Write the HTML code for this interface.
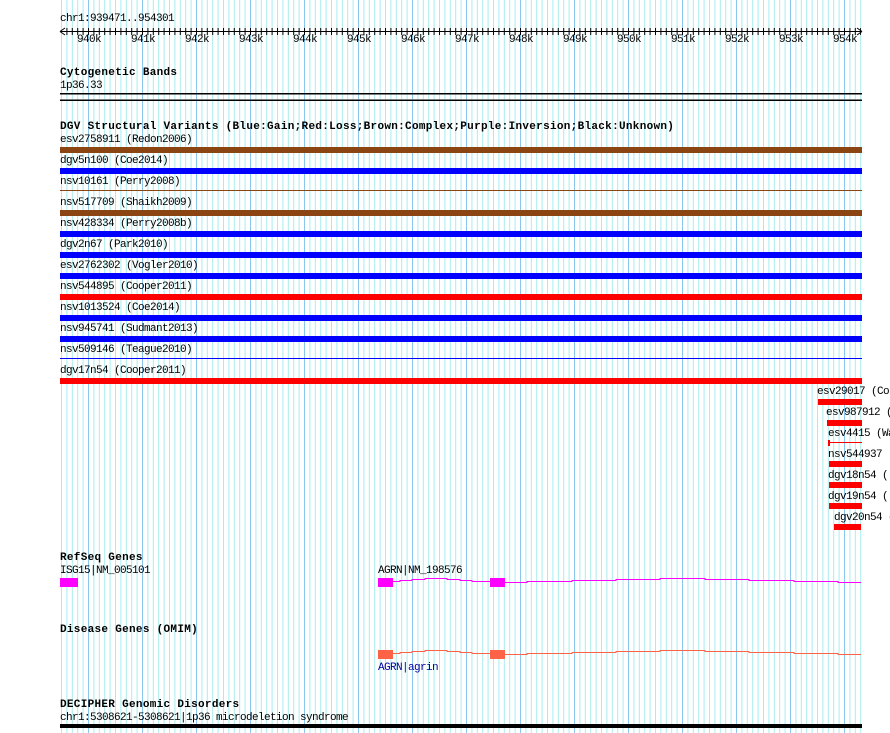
<!DOCTYPE html>
<html><head><meta charset="utf-8"><style>
html,body{margin:0;padding:0;background:#fff;width:890px;height:733px;overflow:hidden}
body{position:relative;font-family:"Liberation Mono",monospace;font-size:11px;letter-spacing:-0.6px;color:#000}
.t{position:absolute;white-space:pre;line-height:11px}
.b{font-weight:bold;letter-spacing:0.3px}
</style></head><body>
<svg width="890" height="733" style="position:absolute;left:0;top:0">
<defs>
<pattern id="g" patternUnits="userSpaceOnUse" x="34" y="0" width="54" height="733">
<rect x="0" y="0" width="1" height="733" fill="#88c8ee"/>
<rect x="5.4" y="0" width="1" height="733" fill="#a8ecec"/>
<rect x="10.8" y="0" width="1" height="733" fill="#a8ecec"/>
<rect x="16.2" y="0" width="1" height="733" fill="#a8ecec"/>
<rect x="21.6" y="0" width="1" height="733" fill="#a8ecec"/>
<rect x="27" y="0" width="1" height="733" fill="#a8ecec"/>
<rect x="32.4" y="0" width="1" height="733" fill="#a8ecec"/>
<rect x="37.8" y="0" width="1" height="733" fill="#a8ecec"/>
<rect x="43.2" y="0" width="1" height="733" fill="#a8ecec"/>
<rect x="48.6" y="0" width="1" height="733" fill="#a8ecec"/>
</pattern>
<pattern id="tk" patternUnits="userSpaceOnUse" x="34" y="0" width="5.4" height="40">
<rect x="0" y="28" width="1" height="7" fill="#000"/>
</pattern>
</defs>
<rect x="60.5" y="0" width="801.5" height="733" fill="url(#g)"/>
<rect x="61" y="31" width="800" height="1" fill="#000"/>
<rect x="64" y="28" width="797" height="7" fill="url(#tk)"/>
<path d="M60 31.5 L65 28 M60 31.5 L65 35 M862 31.5 L857 28 M862 31.5 L857 35" stroke="#000" stroke-width="1" fill="none"/>
<rect x="60" y="93" width="802" height="1.5" fill="#000"/>
<rect x="60" y="99.5" width="802" height="1.5" fill="#000"/>
<rect x="60" y="147" width="802" height="6" fill="#8b4513"/>
<rect x="60" y="168" width="802" height="6" fill="#0000ff"/>
<rect x="60" y="190" width="802" height="1" fill="#8b4513"/>
<rect x="60" y="210" width="802" height="6" fill="#8b4513"/>
<rect x="60" y="231" width="802" height="6" fill="#0000ff"/>
<rect x="60" y="252" width="802" height="6" fill="#0000ff"/>
<rect x="60" y="273" width="802" height="6" fill="#0000ff"/>
<rect x="60" y="294" width="802" height="6" fill="#ff0000"/>
<rect x="60" y="315" width="802" height="6" fill="#0000ff"/>
<rect x="60" y="336" width="802" height="6" fill="#0000ff"/>
<rect x="60" y="358" width="802" height="1" fill="#0000ff"/>
<rect x="60" y="378" width="802" height="6" fill="#ff0000"/>
<rect x="818" y="399" width="44" height="6" fill="#ff0000"/>
<rect x="827" y="420" width="35" height="6" fill="#ff0000"/>
<rect x="828" y="440" width="2" height="6" fill="#ff0000"/>
<rect x="828" y="442" width="34" height="1" fill="#ff0000"/>
<rect x="829" y="461" width="33" height="6" fill="#ff0000"/>
<rect x="829" y="482" width="33" height="6" fill="#ff0000"/>
<rect x="829" y="503" width="33" height="6" fill="#ff0000"/>
<rect x="834" y="524" width="27" height="6" fill="#ff0000"/>
<rect x="60" y="578" width="18" height="9" fill="#ff00ff"/>
<rect x="378" y="578" width="15" height="9" fill="#ff00ff"/>
<rect x="490" y="578" width="15" height="9" fill="#ff00ff"/>
<path d="M393 581.5H400V580.5H412V579.5H425V578.5H447V579.5H460V580.5H472V581.5H490 M505 582.5H527V581.5H572V580.5H616V579.5H660V578.5H705V579.5H749V580.5H794V581.5H838V582.5H861" stroke="#ff00ff" stroke-width="1" fill="none"/>
<rect x="378" y="650" width="15" height="9" fill="#ff6347"/>
<rect x="490" y="650" width="15" height="9" fill="#ff6347"/>
<path d="M393 653.5H400V652.5H412V651.5H425V650.5H447V651.5H460V652.5H472V653.5H490 M505 654.5H527V653.5H572V652.5H616V651.5H660V650.5H705V651.5H749V652.5H794V653.5H838V654.5H861" stroke="#ff6347" stroke-width="1" fill="none"/>
<rect x="60" y="724" width="802" height="4" fill="#000"/>
</svg>
<div class="t" style="left:60px;top:14px">chr1:939471..954301</div>
<div class="t" style="left:77px;top:35px">940k</div>
<div class="t" style="left:131px;top:35px">941k</div>
<div class="t" style="left:185px;top:35px">942k</div>
<div class="t" style="left:239px;top:35px">943k</div>
<div class="t" style="left:293px;top:35px">944k</div>
<div class="t" style="left:347px;top:35px">945k</div>
<div class="t" style="left:401px;top:35px">946k</div>
<div class="t" style="left:455px;top:35px">947k</div>
<div class="t" style="left:509px;top:35px">948k</div>
<div class="t" style="left:563px;top:35px">949k</div>
<div class="t" style="left:617px;top:35px">950k</div>
<div class="t" style="left:671px;top:35px">951k</div>
<div class="t" style="left:725px;top:35px">952k</div>
<div class="t" style="left:779px;top:35px">953k</div>
<div class="t" style="left:833px;top:35px">954k</div>
<div class="t b" style="left:60px;top:68px">Cytogenetic Bands</div>
<div class="t" style="left:60px;top:81px">1p36.33</div>
<div class="t b" style="left:60px;top:122px">DGV Structural Variants (Blue:Gain;Red:Loss;Brown:Complex;Purple:Inversion;Black:Unknown)</div>
<div class="t" style="left:60px;top:135px">esv2758911 (Redon2006)</div>
<div class="t" style="left:60px;top:156px">dgv5n100 (Coe2014)</div>
<div class="t" style="left:60px;top:177px">nsv10161 (Perry2008)</div>
<div class="t" style="left:60px;top:198px">nsv517709 (Shaikh2009)</div>
<div class="t" style="left:60px;top:219px">nsv428334 (Perry2008b)</div>
<div class="t" style="left:60px;top:240px">dgv2n67 (Park2010)</div>
<div class="t" style="left:60px;top:261px">esv2762302 (Vogler2010)</div>
<div class="t" style="left:60px;top:282px">nsv544895 (Cooper2011)</div>
<div class="t" style="left:60px;top:303px">nsv1013524 (Coe2014)</div>
<div class="t" style="left:60px;top:324px">nsv945741 (Sudmant2013)</div>
<div class="t" style="left:60px;top:345px">nsv509146 (Teague2010)</div>
<div class="t" style="left:60px;top:366px">dgv17n54 (Cooper2011)</div>
<div class="t" style="left:817px;top:387px">esv29017 (Co</div>
<div class="t" style="left:826px;top:408px">esv987912 (</div>
<div class="t" style="left:828px;top:429px">esv4415 (Wa</div>
<div class="t" style="left:828px;top:450px">nsv544937</div>
<div class="t" style="left:828px;top:471px">dgv18n54 (</div>
<div class="t" style="left:828px;top:492px">dgv19n54 (</div>
<div class="t" style="left:834px;top:513px">dgv20n54 (</div>
<div class="t b" style="left:60px;top:553px">RefSeq Genes</div>
<div class="t" style="left:60px;top:566px">ISG15|NM_005101</div>
<div class="t" style="left:378px;top:566px">AGRN|NM_198576</div>
<div class="t b" style="left:60px;top:625px">Disease Genes (OMIM)</div>
<div class="t" style="left:378px;top:663px;color:#0000a0">AGRN|agrin</div>
<div class="t b" style="left:60px;top:700px">DECIPHER Genomic Disorders</div>
<div class="t" style="left:60px;top:713px">chr1:5308621-5308621|1p36 microdeletion syndrome</div>
</body></html>
